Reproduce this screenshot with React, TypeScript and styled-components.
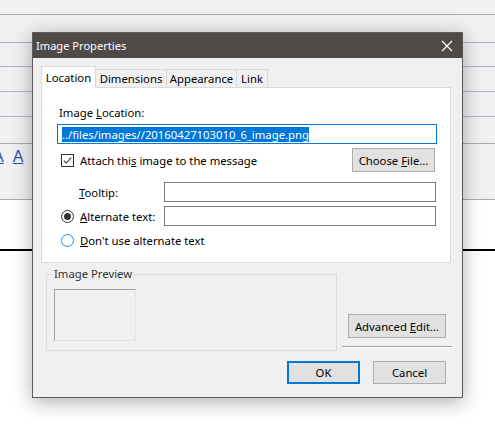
import React from 'react';
import styled, { createGlobalStyle } from 'styled-components';

const GlobalStyle = createGlobalStyle`
  html, body {
    margin: 0;
    padding: 0;
  }
  body {
    width: 495px;
    height: 430px;
    overflow: hidden;
    background: #ffffff;
    font-family: "Noto Sans", "Open Sans", sans-serif;
    font-size: 11.3px;
    color: #000000;
  }
`;

const rules = [
  { h: 14, line: '#a9a9a9' },
  { h: 27, line: '#a7b6cb' },
  { h: 23, line: '#a7b6cb' },
  { h: 24, line: '#a7b6cb' },
  { h: 24, line: '#a7b6cb' },
  { h: 26, line: '#a9a9a9' },
];

const tabs = [
  { label: 'Location', w: 55 },
  { label: 'Dimensions', w: 72 },
  { label: 'Appearance', w: 71 },
  { label: 'Link', w: 32 },
];

export default function App() {
  return (
    <>
      <GlobalStyle />
      <Backdrop>
        {rules.map((r, i) => (
          <Rule key={i} $h={r.h} $line={r.line} />
        ))}
        <Toolbar>
          <FontGlyph $offset={-7}>A</FontGlyph>
          <FontGlyph>A</FontGlyph>
        </Toolbar>
        <Editor />

        <Dialog>
          <TitleBar>
            <span>Image Properties</span>
            <CloseIcon width="12" height="12" viewBox="0 0 12 12">
              <path d="M1 1 L11 11 M11 1 L1 11" stroke="#ffffff" strokeWidth="1.2" />
            </CloseIcon>
          </TitleBar>

          <Body>
            <TabRow>
              {tabs.map((t, i) => (
                <Tab key={t.label} $w={t.w} $active={i === 0}>
                  {t.label}
                </Tab>
              ))}
            </TabRow>

            <Panel>
              <FieldLabel>
                Image <u>L</u>ocation:
              </FieldLabel>
              <TextBox $focused>
                <Selected>../files/images//20160427103010_6_image.png</Selected>
              </TextBox>

              <CheckRow>
                <CheckBox width="13" height="13" viewBox="0 0 13 13">
                  <rect x="0.5" y="0.5" width="12" height="12" fill="#ffffff" stroke="#333333" />
                  <path d="M2.8 6.6 L5.2 9 L10.2 3.6" fill="none" stroke="#333333" strokeWidth="1.1" />
                </CheckBox>
                <span>
                  Attach thi<u>s</u> image to the message
                </span>
                <Button $w={83} $h={24} $push>
                  <span>
                    Choose <u>F</u>ile...
                  </span>
                </Button>
              </CheckRow>

              <FormGrid>
                <span />
                <GridLabel $indent={-1}>
                  <u>T</u>ooltip:
                </GridLabel>
                <TextBox />
                <Radio $checked />
                <GridLabel>
                  <u>A</u>lternate text:
                </GridLabel>
                <TextBox />
              </FormGrid>

              <RadioRow>
                <Radio />
                <span>
                  <u>D</u>on't use alternate text
                </span>
              </RadioRow>
            </Panel>

            <BottomRow>
              <GroupBox>
                <Legend>Image Preview</Legend>
                <PreviewBox />
              </GroupBox>
              <SideColumn>
                <Button $w={98} $h={24}>
                  <span>
                    Advanced <u>E</u>dit...
                  </span>
                </Button>
                <Separator />
              </SideColumn>
            </BottomRow>

            <ButtonRow>
              <Button $w={73} $h={23} $default>
                <span>OK</span>
              </Button>
              <Button $w={73} $h={23}>
                <span>Cancel</span>
              </Button>
            </ButtonRow>
          </Body>
        </Dialog>
      </Backdrop>
    </>
  );
}

const Backdrop = styled.div`
  position: relative;
  width: 495px;
  height: 430px;
  overflow: hidden;
  background: #ffffff;
`;

const Rule = styled.div<{ $h: number; $line: string }>`
  height: ${(p) => p.$h}px;
  border-bottom: 1px solid ${(p) => p.$line};
  background: #f0f0f0;
`;

const Toolbar = styled.div`
  height: 56px;
  border-bottom: 1px solid #a9a9a9;
  background: #f0f0f0;
  display: flex;
  gap: 9px;
  padding-top: 4px;
  box-sizing: border-box;
`;

const FontGlyph = styled.span<{ $offset?: number }>`
  font-family: "Liberation Sans", Arial, sans-serif;
  font-size: 16px;
  line-height: 18px;
  color: #2a55a8;
  text-decoration: underline;
  margin-left: ${(p) => p.$offset ?? 0}px;
`;

const Editor = styled.div`
  height: 49px;
  border-bottom: 2px solid #000000;
  background: #ffffff;
`;

const Dialog = styled.div`
  position: absolute;
  left: 32px;
  top: 32px;
  width: 431px;
  height: 366px;
  box-sizing: border-box;
  border: 1px solid #5c5c5c;
  background: #f0f0f0;
  box-shadow: 0 4px 18px rgba(0, 0, 0, 0.32);
  display: flex;
  flex-direction: column;
`;

const TitleBar = styled.div`
  height: 25px;
  background: #4d4a48;
  color: #ffffff;
  display: flex;
  align-items: center;
  justify-content: space-between;
  padding: 0 9px 0 3px;
  font-size: 11.1px;
`;

const CloseIcon = styled.svg`
  display: block;
`;

const Body = styled.div`
  padding: 8px 0 0 8px;
  display: flex;
  flex-direction: column;
`;

const TabRow = styled.div`
  display: flex;
  align-items: flex-end;
  position: relative;
  z-index: 1;
  margin-bottom: -1px;
`;

const Tab = styled.div<{ $active?: boolean; $w: number }>`
  box-sizing: border-box;
  width: ${(p) => p.$w}px;
  height: ${(p) => (p.$active ? 22 : 19)}px;
  border: 1px solid #d9d9d9;
  border-bottom: ${(p) => (p.$active ? 'none' : '1px solid #d9d9d9')};
  margin-left: ${(p) => (p.$active ? 0 : -1)}px;
  background: ${(p) => (p.$active ? '#ffffff' : '#f0f0f0')};
  display: flex;
  align-items: center;
  justify-content: center;
  padding-bottom: ${(p) => (p.$active ? 1 : 0)}px;
  white-space: nowrap;
  &:first-child {
    margin-left: 0;
  }
`;

const Panel = styled.div`
  box-sizing: border-box;
  width: 410px;
  height: 176px;
  background: #ffffff;
  border: 1px solid #d9d9d9;
  padding: 17px 13px 0 15px;
  display: flex;
  flex-direction: column;
`;

const FieldLabel = styled.div`
  line-height: 16px;
  padding-left: 2px;
  margin-bottom: 3px;
`;

const TextBox = styled.div<{ $focused?: boolean }>`
  box-sizing: border-box;
  height: 20px;
  border: 1px solid ${(p) => (p.$focused ? '#0078d7' : '#7a7a7a')};
  background: #ffffff;
  display: flex;
  align-items: center;
  padding-left: 4px;
  overflow: hidden;
  white-space: nowrap;
`;

const Selected = styled.span`
  background: #0078d7;
  color: #ffffff;
  line-height: 15px;
`;

const CheckRow = styled.div`
  margin-top: 4px;
  height: 24px;
  display: flex;
  align-items: center;
  gap: 6px;
  padding: 0 2px 0 4px;
`;

const CheckBox = styled.svg`
  display: block;
  flex: none;
`;

const Button = styled.div<{ $w: number; $h: number; $push?: boolean; $default?: boolean }>`
  box-sizing: border-box;
  width: ${(p) => p.$w}px;
  height: ${(p) => p.$h}px;
  margin-left: ${(p) => (p.$push ? 'auto' : '0')};
  background: #e1e1e1;
  border: ${(p) => (p.$default ? '2px solid #0078d7' : '1px solid #adadad')};
  display: flex;
  align-items: center;
  justify-content: center;
  white-space: nowrap;
`;

const FormGrid = styled.div`
  margin-top: 10px;
  padding-left: 4px;
  display: grid;
  grid-template-columns: 19px 84px 272px;
  grid-auto-rows: 20px;
  row-gap: 4px;
  align-items: center;
`;

const GridLabel = styled.span<{ $indent?: number }>`
  margin-left: ${(p) => p.$indent ?? 0}px;
  white-space: nowrap;
`;

const Radio = styled.span<{ $checked?: boolean }>`
  box-sizing: border-box;
  width: 13px;
  height: 13px;
  border-radius: 50%;
  border: 1px solid ${(p) => (p.$checked ? '#333333' : '#2b8be6')};
  background: #ffffff;
  display: flex;
  align-items: center;
  justify-content: center;
  flex: none;
  &::after {
    content: '';
    display: ${(p) => (p.$checked ? 'block' : 'none')};
    width: 7px;
    height: 7px;
    border-radius: 50%;
    background: #333333;
  }
`;

const RadioRow = styled.div`
  margin-top: 6px;
  padding-left: 4px;
  height: 16px;
  display: flex;
  align-items: center;
  gap: 6px;
`;

const BottomRow = styled.div`
  margin-top: 3px;
  padding-left: 5px;
  display: flex;
  gap: 5px;
`;

const GroupBox = styled.fieldset`
  box-sizing: border-box;
  width: 291px;
  min-width: 0;
  margin: 0;
  padding: 7px 0 9px 7px;
  border: 1px solid #dcdcdc;
`;

const Legend = styled.legend`
  padding: 0 1px;
  margin-left: -1px;
  line-height: 16px;
  color: #333333;
`;

const PreviewBox = styled.div`
  box-sizing: border-box;
  width: 82px;
  height: 52px;
  border-top: 1px solid #a0a0a0;
  border-left: 1px solid #a0a0a0;
  border-right: 1px solid #e3e3e3;
  border-bottom: 1px solid #e3e3e3;
`;

const SideColumn = styled.div`
  width: 110px;
  display: flex;
  flex-direction: column;
  justify-content: flex-end;
  align-items: center;
  padding-bottom: 3px;
`;

const Separator = styled.div`
  align-self: stretch;
  margin-top: 8px;
  border-top: 1px solid #a0a0a0;
  border-bottom: 1px solid #ffffff;
`;

const ButtonRow = styled.div`
  margin-top: 10px;
  width: 405px;
  display: flex;
  justify-content: flex-end;
  gap: 13px;
`;
